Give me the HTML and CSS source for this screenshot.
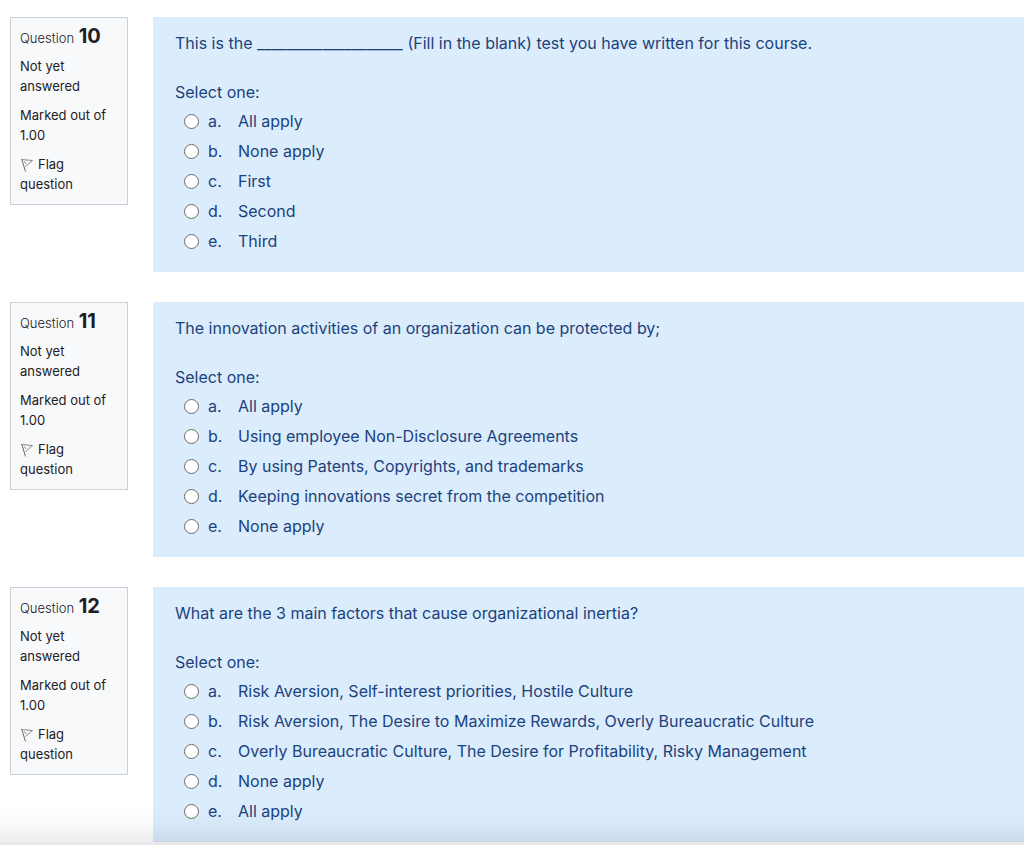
FILE: index.html
```
<!DOCTYPE html>
<html lang="en">
<head>
	<meta charset="UTF-8">
	<title>Quiz</title>
	<link rel="stylesheet" href="styles.css">
</head>
<body>
	<form class="quiz">
		<section class="que">
			<div class="info">
				<h3 class="no">Question <span class="qno">10</span></h3>
				<div class="state">Not yet answered</div>
				<div class="grade">Marked out of 1.00</div>
				<a class="flag" href="#"><svg class="flag-icon" viewBox="0 0 12 14"><path class="pole" d="M1 2L4.5 13.5"/><path d="M0 1.5L11.5 2.5L4.5 8.5M3.5 3.5L5 6"/></svg>Flag question</a>
			</div>
			<fieldset class="content">
				<p class="qtext">This is the ____________________ (Fill in the blank) test you have written for this course.</p>
				<p class="prompt">Select one:</p>
				<div class="answer">
					<div class="row"><input type="radio" name="q10" id="q10a"><label for="q10a"><span class="num">a.</span>All apply</label></div>
					<div class="row"><input type="radio" name="q10" id="q10b"><label for="q10b"><span class="num">b.</span>None apply</label></div>
					<div class="row"><input type="radio" name="q10" id="q10c"><label for="q10c"><span class="num">c.</span>First</label></div>
					<div class="row"><input type="radio" name="q10" id="q10d"><label for="q10d"><span class="num">d.</span>Second</label></div>
					<div class="row"><input type="radio" name="q10" id="q10e"><label for="q10e"><span class="num">e.</span>Third</label></div>
				</div>
			</fieldset>
		</section>
		<section class="que">
			<div class="info">
				<h3 class="no">Question <span class="qno">11</span></h3>
				<div class="state">Not yet answered</div>
				<div class="grade">Marked out of 1.00</div>
				<a class="flag" href="#"><svg class="flag-icon" viewBox="0 0 12 14"><path class="pole" d="M1 2L4.5 13.5"/><path d="M0 1.5L11.5 2.5L4.5 8.5M3.5 3.5L5 6"/></svg>Flag question</a>
			</div>
			<fieldset class="content">
				<p class="qtext">The innovation activities of an organization can be protected by;</p>
				<p class="prompt">Select one:</p>
				<div class="answer">
					<div class="row"><input type="radio" name="q11" id="q11a"><label for="q11a"><span class="num">a.</span>All apply</label></div>
					<div class="row"><input type="radio" name="q11" id="q11b"><label for="q11b"><span class="num">b.</span>Using employee Non-Disclosure Agreements</label></div>
					<div class="row"><input type="radio" name="q11" id="q11c"><label for="q11c"><span class="num">c.</span>By using Patents, Copyrights, and trademarks</label></div>
					<div class="row"><input type="radio" name="q11" id="q11d"><label for="q11d"><span class="num">d.</span>Keeping innovations secret from the competition</label></div>
					<div class="row"><input type="radio" name="q11" id="q11e"><label for="q11e"><span class="num">e.</span>None apply</label></div>
				</div>
			</fieldset>
		</section>
		<section class="que">
			<div class="info">
				<h3 class="no">Question <span class="qno">12</span></h3>
				<div class="state">Not yet answered</div>
				<div class="grade">Marked out of 1.00</div>
				<a class="flag" href="#"><svg class="flag-icon" viewBox="0 0 12 14"><path class="pole" d="M1 2L4.5 13.5"/><path d="M0 1.5L11.5 2.5L4.5 8.5M3.5 3.5L5 6"/></svg>Flag question</a>
			</div>
			<fieldset class="content">
				<p class="qtext">What are the 3 main factors that cause organizational inertia?</p>
				<p class="prompt">Select one:</p>
				<div class="answer">
					<div class="row"><input type="radio" name="q12" id="q12a"><label for="q12a"><span class="num">a.</span>Risk Aversion, Self-interest priorities, Hostile Culture</label></div>
					<div class="row"><input type="radio" name="q12" id="q12b"><label for="q12b"><span class="num">b.</span>Risk Aversion, The Desire to Maximize Rewards, Overly Bureaucratic Culture</label></div>
					<div class="row"><input type="radio" name="q12" id="q12c"><label for="q12c"><span class="num">c.</span>Overly Bureaucratic Culture, The Desire for Profitability, Risky Management</label></div>
					<div class="row"><input type="radio" name="q12" id="q12d"><label for="q12d"><span class="num">d.</span>None apply</label></div>
					<div class="row"><input type="radio" name="q12" id="q12e"><label for="q12e"><span class="num">e.</span>All apply</label></div>
				</div>
			</fieldset>
		</section>
	</form>
	<div class="shade"></div>
</body>
</html>
```
FILE: styles.css
```
*{
	box-sizing: border-box;
}
body{
	margin: 0;
	background: #fff;
	font-family: Inter, "Liberation Sans", sans-serif;
	font-size: 16px;
	line-height: 24px;
	color: #1d2125;
}
p, h3{
	margin: 0;
}
.quiz{
	display: flex;
	flex-direction: column;
	gap: 30px;
	padding: 17px 0 2px 10px;
}
.que{
	display: flex;
	align-items: flex-start;
	gap: 25px;
}
.info{
	flex: 0 0 118px;
	padding: 8px 9px 10px;
	border: 1px solid #cad0d7;
	background: #f8f9fb;
	font-size: 13px;
	line-height: 20px;
}
.no{
	font-size: 13px;
	font-weight: 300;
}
.qno{
	margin-left: 1px;
	font-size: 20px;
	font-weight: 700;
}
.state{
	margin-top: 8px;
}
.grade, .flag{
	display: block;
	margin-top: 9px;
}
.flag{
	color: inherit;
	text-decoration: none;
}
.flag-icon{
	width: 12px;
	height: 14px;
	margin: 0 5px 0 1px;
	vertical-align: -3px;
	fill: none;
	stroke: #888;
}
.pole{
	stroke: #666;
}
.content{
	flex: 1;
	min-width: 0;
	margin: 0;
	padding: 14px 22px 16px;
	border: 0;
	background: #dbecfd;
	color: #1c427c;
}
.prompt{
	margin-top: 25px;
}
.answer{
	margin-top: 2px;
}
.row{
	display: flex;
	align-items: center;
	min-height: 30px;
	padding-left: 9px;
}
.row input{
	appearance: none;
	flex: none;
	width: 15px;
	height: 15px;
	margin: 0 9px 0 0;
	border: 1px solid #6b6b6b;
	border-radius: 50%;
	background: #fff;
}
.row input:checked{
	border: 5px solid #0f6cbf;
}
.row label{
	display: flex;
}
.num{
	flex: none;
	width: 30px;
}
/* soft shadow over the bottom edge of the window */
.shade{
	position: fixed;
	left: 0;
	right: 0;
	bottom: 0;
	height: 38px;
	border-bottom: 2px solid #e6e7e9;
	background: linear-gradient(rgba(0,0,0,0), rgba(0,0,0,.02) 50%, rgba(0,0,0,.08));
	pointer-events: none;
}
```
